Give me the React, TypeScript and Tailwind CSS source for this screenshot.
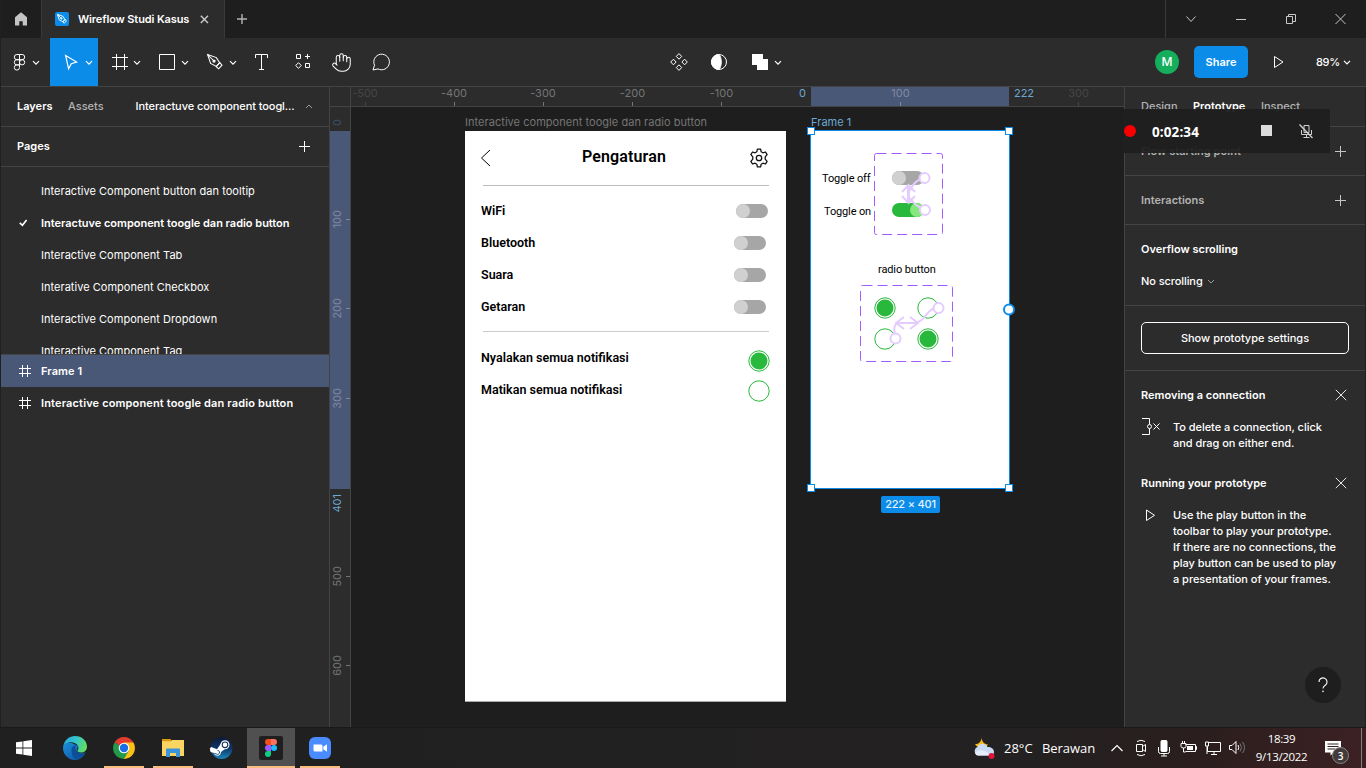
import React from "react";
import { Hand } from "lucide-react";

type P = { children?: React.ReactNode; className?: string };

/* Line icon on its own canvas; w and h are the viewBox and the pixel size. */
function Svg({ w, h, children, className = "", sw = 1, stroke = "#fff" }: P & { w: number; h: number; sw?: number; stroke?: string }) {
  return (
    <svg width={w} height={h} viewBox={`0 0 ${w} ${h}`} fill="none" stroke={stroke} strokeWidth={sw} className={`shrink-0 ${className}`}>
      {children}
    </svg>
  );
}

const Chevron = ({ x = 36 }: { x?: number }) => <path d={`M${x} 23.2l3 3 3-3`} strokeWidth="1.2" />;

const penShape = (
  <>
    <path d="M0.6 0.6 9.4 3.6l3.2 5.2-3.2 3.6L3.6 9.4z" />
    <path d="M0.8 0.8 6 6" />
    <circle cx="7" cy="7" r="1.1" fill="currentColor" />
    <path d="M9.2 12.6l3.6-4 2.2 2.6-3.4 3.6z" />
  </>
);

function TitleBar() {
  return (
    <div className="flex h-[38px] shrink-0 bg-[#1e1e1e]">
      <div className="flex w-[41px] items-center justify-center border-r border-[#3a3a3a]">
        <Svg w={14} h={14} stroke="none"><path fill="#c4c4c4" d="M7 .3 13 5.2V13.6H8.700V9.300H5.300v4.300H1V5.200z" /></Svg>
      </div>
      <div className="flex w-[183px] items-center border-r border-[#3a3a3a] bg-[#2c2c2c] pl-[13px]">
        <div className="flex h-[14px] w-[14px] items-center justify-center rounded-[2px] bg-[#0c8ce9] text-white">
          <svg width="10" height="10" viewBox="0 0 16 16" fill="none" stroke="currentColor" strokeWidth="1.5">{penShape}</svg>
        </div>
        <span className="ml-[9px] w-[111px] whitespace-nowrap text-[11px] font-semibold tracking-[-0.12px] text-white">Wireflow Studi Kasus</span>
        <Svg w={9} h={9} sw={1.4} stroke="#ccc" className="ml-[11px]"><path d="M.8.8l7.200 7.200M8 .8.8 8" /></Svg>
      </div>
      <div className="flex w-[34px] items-center justify-center">
        <Svg w={10} h={10} sw={1.4} stroke="#b4b4b4"><path d="M5 0v10M0 5h10" /></Svg>
      </div>
      <div className="ml-auto flex w-[201px] border-l border-[#3a3a3a]">
        <Svg w={50} h={38} stroke="#c8c8c8"><path d="M20.5 16.5l4.5 5 4.5-5" /></Svg>
        <Svg w={50} h={38} stroke="#c8c8c8"><path d="M20 19.5h10" /></Svg>
        <Svg w={50} h={38} stroke="#c8c8c8"><path d="M20.500 16.500h6v7h-6zM22.500 16v-1.500h7v7h-2.500" /></Svg>
        <Svg w={50} h={38} stroke="#c8c8c8"><path d="M19.500 14l10 10M29.500 14l-10 10" /></Svg>
      </div>
    </div>
  );
}

function Toolbar() {
  return (
    <div className="flex h-[49px] shrink-0 border-b border-[#444] bg-[#2c2c2c]">
      <Svg w={49} h={48}>
        <path d="M18.500 16.500h-2.600a2.600 2.600 0 0 0 0 5.200h2.600zM18.500 16.500h2.600a2.600 2.600 0 0 1 0 5.200h-2.600zM18.500 21.700h-2.600a2.600 2.600 0 0 0 0 5.200h2.600zM18.500 26.900h-2.600a2.600 2.600 0 1 0 2.600 2.600z" />
        <circle cx="21.100" cy="24.300" r="2.600" />
        <Chevron x={32} />
      </Svg>
      <div className="bg-[#0c8ce9]">
        <Svg w={48} h={48}><path d="M15.600 17.500l11 6.500-5.300 1.700-2.700 5.100z" strokeWidth="1.200" /><Chevron /></Svg>
      </div>
      <Svg w={48} h={48}><path d="M18.500 16v16M26.500 16v16M14 19.500h16M14 28.500h16" /><Chevron /></Svg>
      <Svg w={48} h={48}><path d="M13.500 16.500h15v15h-15z" /><Chevron /></Svg>
      <Svg w={48} h={48}><g transform="translate(13 16)" strokeWidth="1.050" color="#fff">{penShape}</g><Chevron /></Svg>
      <Svg w={40} h={48}><path d="M13.500 20v-3.500h12V20M19.500 16.500v15M17 31.500h5" /></Svg>
      <Svg w={40} h={48}>
        <path d="M14.500 16.500h4v4h-4zM23.500 25.500h4v4h-4zM25.500 16v5M23 18.500h5M16.500 24.700l2.800 2.800-2.800 2.800-2.800-2.800z" />
      </Svg>
      <div className="flex w-[40px] items-center justify-center text-white">
        <Hand size={21} strokeWidth={1.15} className="-ml-px" />
      </div>
      <Svg w={40} h={48}><path d="M12.500 27.200A7.800 7.800 0 1 1 16 30.900L11 32z" /></Svg>

      <div className="ml-auto flex pr-[5px]">
        <Svg w={40} h={48}>
          <path d="M20 15.600l2.700 2.800-2.700 2.800-2.700-2.800zM20 26.800l2.700 2.800-2.700 2.800-2.700-2.800zM14.400 21.200l2.700 2.800-2.700 2.800-2.700-2.800zM25.600 21.200l2.700 2.800-2.700 2.800-2.700-2.800z" />
        </Svg>
        <Svg w={40} h={48}>
          <circle cx="20" cy="24" r="7.500" />
          <path d="M20 16.500a7.500 7.500 0 0 0 0 15c3-3 3-12 0-15z" fill="#fff" />
        </Svg>
        <Svg w={48} h={48} className="ml-px"><path d="M12 16h11v5h5v11H17v-5h-5z" fill="#fff" stroke="none" /><Chevron x={35} /></Svg>
      </div>
      <div className="ml-[362px] flex items-center">
        <div className="flex h-6 w-6 items-center justify-center rounded-full bg-[#14ae5c] text-[12px] font-medium text-white">M</div>
        <div className="ml-[15px] flex h-8 w-[54px] items-center justify-center rounded-[5px] bg-[#0c8ce9] text-[11px] font-semibold text-white">Share</div>
        <Svg w={12} h={14} className="ml-[25px]"><path d="M1.500 1.500v11l8.500-5.500z" /></Svg>
        <span className="ml-[31px] w-[23px] whitespace-nowrap text-[11px] font-medium tracking-[-0.3px] text-white">89%</span>
        <Svg w={8} h={5} sw={1.200} className="ml-[4px] mr-[15px] mt-px"><path d="M1 .8l3 3 3-3" /></Svg>
      </div>
    </div>
  );
}

const pages = [
  "Interactive Component button dan tooltip",
  "Interactuve component toogle dan radio button",
  "Interactive Component Tab",
  "Interative Component Checkbox",
  "Interactive Component Dropdown",
  "Interactive Component Tag",
];

const FrameIcon = () => (
  <Svg w={12} h={12} className="ml-[18px]"><path d="M3.500 0v12M8.500 0v12M0 3.500h12M0 8.500h12" /></Svg>
);

function LeftPanel() {
  return (
    <div className="flex w-[329px] shrink-0 flex-col border-r border-[#444] bg-[#2c2c2c] text-[11px] text-white">
      <div className="flex h-[40px] shrink-0 items-center whitespace-nowrap border-b border-[#444] pl-4">
        <span className="w-[51px] font-semibold">Layers</span>
        <span className="w-[67.500px] font-medium text-[#b3b3b3]">Assets</span>
        <span className="w-[160px] font-medium tracking-[-0.08px]">Interactuve component toogl...</span>
        <Svg w={8} h={5} stroke="#999" className="ml-[9px]"><path d="M1 4l3-3 3 3" /></Svg>
      </div>
      <div className="flex h-[40px] shrink-0 items-center justify-between border-b border-[#444] pl-4 pr-[18px]">
        <span className="font-semibold">Pages</span>
        <Svg w={12} h={12}><path d="M5.500 0v11M0 5.500h11" /></Svg>
      </div>
      <div className="h-[188px] shrink-0 overflow-hidden border-b border-[#444] pt-2">
        {pages.map((p, i) => (
          <div key={p} className="flex h-8 items-center whitespace-nowrap">
            <div className="w-[40px] pl-[18px]">
              {i === 1 && <Svg w={9} h={8} sw={1.600}><path d="M.8 3.800l2.600 2.500L7.600 1" /></Svg>}
            </div>
            <span className={i === 1 ? "font-semibold tracking-[-0.02px]" : "tracking-[0.03px]"}>{p}</span>
          </div>
        ))}
      </div>
      <div className="flex h-8 shrink-0 items-center bg-[#4a5878] font-semibold">
        <FrameIcon /><span className="ml-[10px] tracking-[0.09px]">Frame 1</span>
      </div>
      <div className="flex h-8 shrink-0 items-center whitespace-nowrap font-semibold">
        <FrameIcon /><span className="ml-[10px] tracking-[0.15px]">Interactive component toogle dan radio button</span>
      </div>
    </div>
  );
}

/* Ruler marks: label, centre along the ruler's axis, colour, and whether a tick is drawn. */
const topMarks: [string, number, string, boolean][] = [
  ["-500", 14, "#454545", true], ["-400", 103, "#757575", true], ["-300", 192, "#757575", true],
  ["-200", 281.500, "#757575", true], ["-100", 370.500, "#757575", true], ["0", 451.500, "#6ba8d4", false],
  ["100", 549.500, "#8088a0", true], ["222", 673, "#6ba8d4", false], ["300", 727.500, "#454545", true],
];
const sideMarks: [string, number, string, boolean][] = [
  ["0", 15, "#3a5266", false], ["100", 112.500, "#8088a0", true], ["200", 201.500, "#8088a0", true], ["300", 291, "#8088a0", true],
  ["401", 396, "#6ba8d4", false], ["500", 469.500, "#757575", true], ["600", 558.500, "#757575", true],
];

function TopRuler() {
  return (
    <div className="relative h-[20px] shrink-0 border-b border-[#444] bg-[#2c2c2c]">
      <div className="absolute left-[460px] top-0 h-full w-[198px] bg-[#4a5878]" />
      {topMarks.map(([t, x, c, tick]) => (
        <div key={t} className="absolute top-0 flex h-full w-[40px] -translate-x-1/2 flex-col items-center text-[11px] leading-[13px]" style={{ left: x, color: c }}>
          <span>{t}</span>
          {tick && <i className="mt-[2px] h-[4px] w-px" style={{ backgroundColor: c }} />}
        </div>
      ))}
    </div>
  );
}

function SideRuler() {
  return (
    <div className="relative w-[21px] shrink-0 border-r border-[#444] bg-[#2c2c2c]">
      <div className="absolute left-0 top-[24px] h-[358px] w-full bg-[#4a5878]" />
      {sideMarks.map(([t, y, c, tick]) => (
        <div key={t} className="absolute left-0 flex h-[30px] w-full -translate-y-1/2 items-center justify-between text-[11px]" style={{ top: y, color: c }}>
          <span className="w-[15px] rotate-180 text-center leading-[15px] [writing-mode:vertical-rl]">{t}</span>
          {tick && <i className="h-px w-[4px]" style={{ backgroundColor: c }} />}
        </div>
      ))}
    </div>
  );
}

const Toggle = ({ on = false, className = "" }: { on?: boolean; className?: string }) => (
  <div className={`flex h-[14px] w-8 rounded-full ${on ? "justify-end bg-[#28b83c]" : "bg-[#a6a6a6]"} ${className}`}>
    <div className={`h-[14px] w-[14px] rounded-full ${on ? "bg-[#86e77d]" : "bg-[#d0d0d0]"}`} />
  </div>
);

const Radio = ({ on = false, className = "" }: { on?: boolean; className?: string }) => (
  <Svg w={22} h={22} stroke="#28b83c" className={className}>
    <circle cx="11" cy="11" r="10.200" />
    {on && <circle cx="11" cy="11" r="8.500" fill="#28b83c" stroke="none" />}
  </Svg>
);

function PhoneFrame() {
  return (
    <div className="absolute left-[114px] top-[24px] flex h-[571px] w-[321px] flex-col border-b border-[#aaa] bg-white pl-4 font-['Roboto',sans-serif] text-black">
      <div className="flex h-[54px] items-center pr-[17px]">
        <Svg w={12} h={18} stroke="#000" className="-ml-px -mt-px"><path d="M10 1L1.500 9l8.500 8" /></Svg>
        <span className="flex-1 pb-[3px] pl-[7px] text-center text-[16px] font-semibold leading-4 tracking-[0.12px]">Pengaturan</span>
        <Svg w={20} h={20} stroke="#111" sw={1.300} className="-mt-px">
          <circle cx="10" cy="10" r="2.700" />
          <path strokeLinejoin="round" d="M8.400 1.200h3.200l.6 2.600 1.700 1 2.600-.8 1.600 2.700L16.200 8.900v2.200l1.900 2.200-1.600 2.700-2.600-.8-1.700 1-.6 2.600H8.400l-.6-2.600-1.700-1-2.600.8-1.600-2.700 1.900-2.200V8.900L1.900 6.700 3.500 4l2.600.8 1.700-1z" />
        </Svg>
      </div>
      <div className="ml-[1.500px] h-px w-[286px] bg-[#bdbdbd]" />
      <div className="flex flex-col pt-[9px] text-[12.500px] font-semibold">
        {["WiFi", "Bluetooth", "Suara", "Getaran"].map((t, i) => (
          <div key={t} className={`flex h-8 items-center justify-between ${i === 0 ? "pr-[18px]" : "pr-[20px]"}`}>
            <span className={i === 0 ? "" : "pt-px"}>{t}</span><Toggle />
          </div>
        ))}
      </div>
      <div className="ml-[1.500px] mt-[8px] h-px w-[286px] bg-[#ccc]" />
      <div className="flex flex-col pt-[9px] text-[12.500px] font-semibold">
        <div className="flex h-8 items-center justify-between pr-4"><span className="pt-[2px]">Nyalakan semua notifikasi</span><Radio on className="mt-[7px]" /></div>
        <div className="flex h-8 items-center justify-between pr-4"><span className="pt-[2px]">Matikan semua notifikasi</span><Radio className="mt-[4px]" /></div>
      </div>
    </div>
  );
}

function SelectedFrame() {
  return (
    <div className="absolute left-[459px] top-[23px] h-[359px] w-[200px] border border-[#0c8ce9] bg-white font-['Roboto',sans-serif] text-[11px] text-black">
      <span className="absolute left-[11px] top-[39.500px] whitespace-nowrap leading-4 tracking-[-0.14px]">Toggle off</span>
      <span className="absolute left-[13px] top-[72.500px] whitespace-nowrap leading-4 tracking-[-0.14px]">Toggle on</span>
      <span className="absolute left-[67px] top-[130.500px] whitespace-nowrap leading-4 tracking-[-0.12px]">radio button</span>
      <Toggle className="absolute left-[81px] top-[40px]" />
      <Toggle on className="absolute left-[81px] top-[72px]" />
      <Radio on className="absolute left-[63px] top-[166px]" />
      <Radio className="absolute left-[106px] top-[166px]" />
      <Radio className="absolute left-[63px] top-[196.500px]" />
      <Radio on className="absolute left-[106px] top-[196.500px]" />
      {/* variant outlines, prototype noodles and selection handles */}
      <svg className="absolute -left-[1px] -top-[1px] overflow-visible" width="200" height="359" viewBox="810 130 200 359" fill="none">
        <g stroke="#a35cff" strokeDasharray="10 5">
          <rect x="874.500" y="153.500" width="68" height="81" rx="2" />
          <rect x="860.500" y="285.500" width="92" height="76" rx="2" />
        </g>
        <g stroke="#e4ccff" strokeWidth="2">
          <path d="M920 179.500c-6 2-8 7-10 11M921 208c-6-3-8-5-11-10" />
          <path d="M908.500 186v16" strokeWidth="3" />
          <path d="M902 192l6.500-7 6.500 7M902 196l6.500 7 6.500-7" />
          <path d="M934 308.500c-8 2-9 14-20 14.500M895 334c-2-6 0-10 3-11" />
          <path d="M896 323h22M904 317l-8 6 8 6M910 317l8 6-8 6" />
          <g fill="#fff">
            <circle cx="924.500" cy="178" r="5" /><circle cx="925" cy="210" r="5" />
            <circle cx="938.500" cy="308" r="5" /><circle cx="895.500" cy="338.500" r="5" />
          </g>
        </g>
        <g stroke="#0c8ce9" fill="#fff">
          <rect x="807.500" y="127.500" width="7" height="7" /><rect x="1005.500" y="127.500" width="7" height="7" />
          <rect x="807.500" y="484.500" width="7" height="7" /><rect x="1005.500" y="484.500" width="7" height="7" />
          <circle cx="1009" cy="309.500" r="5" strokeWidth="2" />
        </g>
      </svg>
    </div>
  );
}

function Canvas() {
  return (
    <div className="flex min-w-0 flex-1 flex-col">
      <div className="flex">
        <div className="w-[21px] shrink-0 border-b border-r border-[#444] bg-[#2c2c2c]" />
        <div className="min-w-0 flex-1 overflow-hidden"><TopRuler /></div>
      </div>
      <div className="flex min-h-0 flex-1">
        <SideRuler />
        <div className="relative flex-1 overflow-hidden bg-[#1e1e1e] text-[11px]">
          <span className="absolute left-[114px] top-[7px] whitespace-nowrap leading-4 tracking-[0.04px] text-[#757575]">Interactive component toogle dan radio button</span>
          <span className="absolute left-[460px] top-[7px] whitespace-nowrap leading-4 tracking-[0.04px] text-[#6ba8d4]">Frame 1</span>
          <PhoneFrame />
          <SelectedFrame />
          <div className="absolute left-[530px] top-[389px] flex h-[17px] w-[59px] items-center justify-center whitespace-nowrap rounded-[2px] bg-[#0c8ce9] font-medium tracking-[-0.2px] text-[#e3f2fd]">222 × 401</div>
        </div>
      </div>
    </div>
  );
}

const Plus = () => <Svg w={11} h={11} stroke="#c4c4c4"><path d="M5.500 0v11M0 5.500h11" /></Svg>;
const Cross = () => <Svg w={12} h={12} stroke="#e6e6e6"><path d="M.8.8l10.400 10.400M11.200.8.8 11.200" /></Svg>;

function RightPanel() {
  return (
    <div className="relative flex w-[241px] shrink-0 flex-col border-l border-[#444] bg-[#2c2c2c] text-[11px] font-medium text-white">
      <div className="flex h-[40px] shrink-0 items-center border-b border-[#444] pl-4 text-[#b3b3b3]">
        <span className="w-[52px]">Design</span>
        <span className="w-[68px] font-semibold text-white">Prototype</span>
        <span>Inspect</span>
      </div>
      <div className="flex h-[49px] shrink-0 items-center justify-between border-b border-[#444] pl-4 pr-[19px] font-semibold text-[#b3b3b3]"><span className="tracking-[0.05px]">Flow starting point</span><Plus /></div>
      <div className="flex h-[49px] shrink-0 items-center justify-between border-b border-[#444] pl-4 pr-[19px] font-semibold text-[#b3b3b3]">Interactions<Plus /></div>
      <div className="flex h-[81px] shrink-0 flex-col border-b border-[#444] pl-4 pt-2">
        <div className="flex h-8 items-center font-semibold">Overflow scrolling</div>
        <div className="flex h-8 items-center tracking-[-0.08px]">No scrolling<Svg w={8} h={5} stroke="#999" className="ml-[4px] mt-px"><path d="M1 1l3 3 3-3" /></Svg></div>
      </div>
      <div className="flex h-[65px] shrink-0 items-center border-b border-[#444] pl-4">
        <div className="flex h-8 w-[208px] items-center justify-center rounded-[5px] border border-white">Show prototype settings</div>
      </div>
      <div className="flex h-[48px] items-center justify-between pl-4 pr-[18px] font-semibold">Removing a connection<Cross /></div>
      <div className="flex h-[40px] pl-4 leading-4 tracking-[-0.04px]">
        <Svg w={20} h={18} className="mr-3 mt-[-1px]"><path d="M1 .5h7.500v6M1 16.500h7.500v-6M12.500 5.500l6 6M18.500 5.500l-6 6" /><circle cx="8.500" cy="8.500" r="2" /></Svg>
        <span className="whitespace-nowrap">To delete a connection, click<br />and drag on either end.</span>
      </div>
      <div className="flex h-[48px] items-center justify-between pl-4 pr-[18px] font-semibold">Running your prototype<Cross /></div>
      <div className="flex pl-4 leading-4 tracking-[-0.03px]">
        <Svg w={20} h={16} className="mr-3"><path d="M5.500 3v10.500l8-5.200z" /></Svg>
        <span className="whitespace-nowrap">Use the play button in the<br />toolbar to play your prototype.<br />If there are no connections, the<br />play button can be used to play<br />a presentation of your frames.</span>
      </div>
      <div className="absolute bottom-[24px] right-[24px] flex h-9 w-9 items-center justify-center rounded-full bg-[#1e1e1e]">
        <Svg w={12} h={16} sw={1.100}><path d="M2 5a4 4 0 1 1 6.500 3C7 9 6 9.800 6 11.500" /><circle cx="6" cy="14.300" r=".3" /></Svg>
      </div>
      {/* screen recorder overlay */}
      <div className="absolute -left-[17px] top-[22px] flex h-[44px] w-[222px] items-center bg-[#1f1f1f]/94">
        <div className="ml-[16px] h-3 w-3 rounded-full bg-[#f80000]" />
        <span className="ml-4 w-[93px] pt-[2px] font-['Open_Sans',sans-serif] text-[13.500px] font-bold tracking-[0.1px] [font-variant-numeric:tabular-nums]">0:02:34</span>
        <div className="-mt-[2px] ml-[16px] h-[11px] w-[11px] bg-[#dcdcdc]" />
        <Svg w={14} h={15} stroke="#d0d0d0" className="ml-[27px]"><path d="M5 1.500h5v7H5zM2.500 6v4.500h10V6M7.500 10.500v3M4.500 13.500h6" /><path d="M.5.500l13 13.500" strokeWidth="1.300" /></Svg>
      </div>
    </div>
  );
}

function Task({ children, bar = "", className = "" }: P & { bar?: string }) {
  return (
    <div className={`relative flex w-12 items-center justify-center ${className}`}>
      {children}
      {bar && <div className={`absolute bottom-0 h-[2px] bg-[#f9be7f] ${bar}`} />}
    </div>
  );
}

function Taskbar() {
  return (
    <div className="flex h-[41px] shrink-0 border-t border-[#1a1a1a] bg-[linear-gradient(90deg,#202020_0%,#232121_75%,#2b1e1e_88%,#3c2123_100%)] text-white">
      <Task>
        <Svg w={16} h={16} stroke="none"><path fill="#fff" d="M0 2.300 6.500 1.400v6.200H0zM7.300 1.300 16 0v7.600H7.300zM0 8.400h6.500v6.200L0 13.700zM7.300 8.400H16V16l-8.700-1.300z" /></Svg>
      </Task>
      <Task className="ml-[3px]">
        <svg width="24" height="24" viewBox="0 0 24 24">
          <defs>
            <linearGradient id="eg" x1="0" y1=".3" x2="1" y2=".6"><stop offset="0" stopColor="#2aa8e0" /><stop offset=".5" stopColor="#35c6c8" /><stop offset="1" stopColor="#66e05a" /></linearGradient>
            <linearGradient id="eb" x1="0" y1="0" x2="1" y2="1"><stop offset="0" stopColor="#1a8fdc" /><stop offset="1" stopColor="#0c50a0" /></linearGradient>
          </defs>
          <path fill="url(#eb)" d="M0 12C0 7 5 6 9 7l6 3-1.500 5.500c2 2.500 6 2.500 9 1C20.500 21 17 24 12 24A12 12 0 0 1 0 12z" />
          <path fill="#0d4f96" d="M8.500 14c0-3.500 3-5 4.500-4.500-1.500 2-1 5 1.500 6.500 2.500 1.400 6 1 8 .3C20 21 17 23 13.500 23c-3 0-5-4-5-9z" />
          <path fill="url(#eg)" d="M.3 10.500C1.200 4 6.500 0 12 0c7 0 12 5 12 10.500 0 4-3 6-6 6-2.500 0-4-1-3.500-2 1-1.500 1.300-3 .5-4.500C13.500 7 10 6 7 6.300 4 6.500 1.300 8 .3 10.500z" />
        </svg>
      </Task>
      <Task className="ml-px" bar="left-[4px] w-[40px]">
        <svg width="22" height="22" viewBox="0 0 22 22">
          <path fill="#e33b2e" d="M11 11 1.500 5.500a11 11 0 0 1 19 0z" />
          <path fill="#fbc116" d="M11 11V5.500h9.500A11 11 0 0 1 11 22z" />
          <path fill="#229a48" d="M11 11 15.800 13.700 11 22A11 11 0 0 1 1.500 5.500z" />
          <circle cx="11" cy="11" r="5.300" fill="#fff" /><circle cx="11" cy="11" r="4.200" fill="#1b6ee6" />
        </svg>
      </Task>
      <Task className="ml-px" bar="left-[4px] w-[40px]">
        <svg width="22" height="20" viewBox="0 0 22 20">
          <path fill="#dc9a10" d="M0 1h8.500L11 4H0z" /><path fill="#fbd562" d="M0 3.300h9l1.200-1.300H22V18H0z" />
          <path fill="#3a94dc" d="M4 19v-7.500q0-1 1-1h12q1 0 1 1V19h-4v-4H8v4z" />
        </svg>
      </Task>
      <Task>
        <svg width="24" height="24" viewBox="0 0 24 24">
          <defs><linearGradient id="st" x1="0" y1="0" x2="0" y2="1"><stop offset="0" stopColor="#0c1a38" /><stop offset=".5" stopColor="#0e3566" /><stop offset="1" stopColor="#1b87bd" /></linearGradient></defs>
          <circle cx="12.500" cy="12" r="11" fill="url(#st)" />
          <path d="M.8 12.500 2.300 11l5.700 2.200L12 7.500l6 4-6 4.500c0 5-6.500 4.500-7 1L1.500 16z" fill="#fff" />
          <circle cx="16" cy="8.800" r="4.500" fill="#fff" /><circle cx="16" cy="8.800" r="2.800" fill="#fff" stroke="#15325c" strokeWidth="1.100" />
          <path d="M5.500 17.300l2 .8a2 2 0 1 0 1-3.700" fill="none" stroke="#1c4a7c" />
        </svg>
      </Task>
      <Task className="ml-[2px] bg-[#505050]" bar="left-0 w-full">
        <div className="flex h-6 w-6 items-center justify-center rounded-[2px] bg-[#1f1f1f]">
          <svg width="12" height="18" viewBox="0 0 12 18">
            <path fill="#f24e1e" d="M6 0H3a3 3 0 0 0 0 6h3z" /><path fill="#ff7262" d="M6 0h3a3 3 0 0 1 0 6H6z" />
            <path fill="#a259ff" d="M6 6H3a3 3 0 0 0 0 6h3z" /><circle cx="9" cy="9" r="3" fill="#1abcfe" />
            <path fill="#0acf83" d="M6 12H3a3 3 0 1 0 3 3z" />
          </svg>
        </div>
      </Task>
      <Task className="ml-px" bar="left-[4px] w-[40px]">
        <svg width="22" height="22" viewBox="0 0 22 22"><rect width="22" height="22" rx="6" fill="#4a8cff" /><path fill="#fff" d="M4.500 7.500h7.500q1.500 0 1.500 1.500v5.500H6q-1.500 0-1.500-1.500zM14.300 9.800l3.700-2.500v7.400l-3.700-2.500z" /></svg>
      </Task>

      <div className="ml-auto flex items-center font-['Open_Sans','Noto_Sans',sans-serif] text-[13px]">
        <svg width="24" height="24" viewBox="0 0 24 24">
          <path d="M10 1c-.5 4 1.500 7 6 7.500-2 4-10 5-13-.5C7 8.500 9.500 5 10 1z" fill="#f9b916" />
          <path d="M6 19.500A4.500 4.500 0 0 1 5.500 11C7 7 13.500 6.500 15.500 11c4 0 6.500 2 6.500 5s-2 3.500-4 3.500z" fill="#c9daf2" />
          <path d="M3 17c4-4 9-3 13 0l3 2.500H6q-2 0-3-2.500z" fill="#e6eefa" />
          <circle cx="19.500" cy="20" r="3" fill="#e0143c" />
        </svg>
        <span className="ml-[8px] w-[38px] whitespace-nowrap pt-[2px]">28°C</span>
        <span className="w-[69px] whitespace-nowrap pt-[2px] tracking-[-0.05px]">Berawan</span>
        <Svg w={12} h={40} sw={1.200}><path d="M.5 23l5.500-5.500 5.500 5.500" /></Svg>
        <Svg w={24} h={40} className="ml-[7px]"><path d="M6.500 16.500h6v7h-6zM12.500 18.500l3-2v7l-3-2M7 13.500q4-2.500 8 0M7 26.500q4 2.500 8 0" /></Svg>
        <Svg w={24} h={40}><rect x="7" y="12.500" width="6" height="11" rx="1" fill="#fff" /><path d="M4.500 19v4.500q0 2 2 2h7q2 0 2-2V19M10 25v3M7 28h6" /></Svg>
        <Svg w={24} h={40}><path d="M7.500 16.500h10v7h-10M17.500 18.500h1v3h-1M3 15.500h5v3q0 1.500-2.500 1.500T3 18.500zM4.500 13v2.500M6.500 13v2.500M5.500 20v4h2" /><path fill="#fff" stroke="none" d="M9 18h6v4H9z" /></Svg>
        <Svg w={24} h={40}><path d="M7 14.500h11.500v9h-13v-5M3.500 14v4h3v-4zM5 18v8M12 23.500v3M9 26.500h6" /></Svg>
        <Svg w={24} h={40}><path d="M3.500 17.500h2.500l4-4v12l-4-4h-2.500z" /><path d="M12 17q1.500 2.500 0 5" /><path d="M14 15.500q3 4 0 8M16.500 14q4 5.500 0 11" stroke="#777" /></Svg>
        <div className="flex w-[63px] flex-col items-center whitespace-nowrap text-[11.500px] leading-[18px] tracking-[-0.35px]"><span>18:39</span><span>9/13/2022</span></div>
        <div className="relative ml-[9px] w-[39px]">
          <Svg w={20} h={20}><path d="M3 3h16v11.500h-7l-3.500 3v-3H3z" fill="#fff" stroke="none" /><path d="M5.500 6h11M5.500 8.500h11M5.500 11h8" stroke="#392224" /></Svg>
          <div className="absolute left-[10px] top-[9px] flex h-[17px] w-[17px] items-center justify-center rounded-full border border-[#8b8485] bg-[#423b3c] text-[10px] font-semibold leading-none">3</div>
        </div>
        <div className="mr-[4px] h-full w-px bg-[#897b7c]" />
      </div>
    </div>
  );
}

export default function App() {
  return (
    <div className="flex h-screen w-full flex-col overflow-hidden bg-[#1e1e1e] font-['Inter',sans-serif]">
      <div className="flex min-h-0 flex-1 flex-col border-l border-[#202020]">
        <TitleBar />
        <Toolbar />
        <div className="flex min-h-0 flex-1 border-r border-[#202020]">
          <LeftPanel />
          <Canvas />
          <RightPanel />
        </div>
      </div>
      <Taskbar />
    </div>
  );
}
